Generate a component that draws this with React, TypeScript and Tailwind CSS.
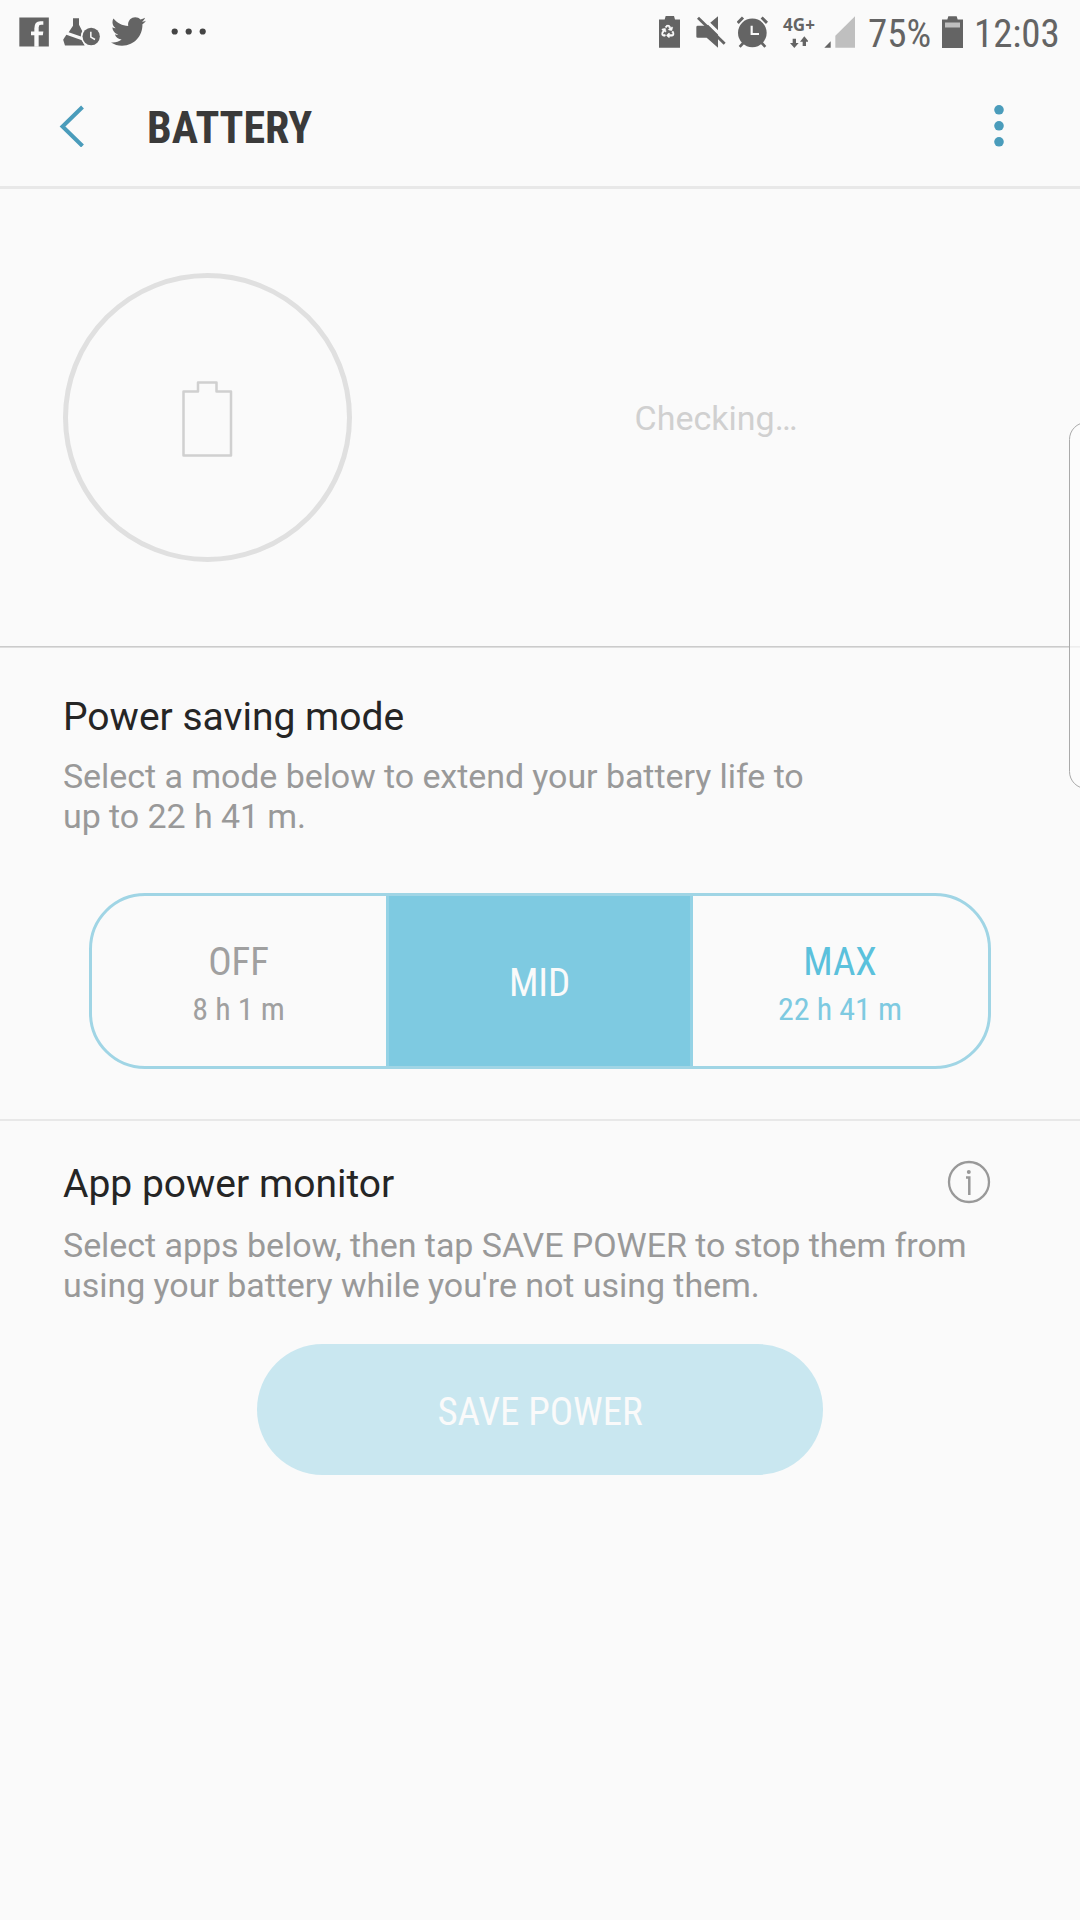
import { FaRecycle, FaTwitter } from "react-icons/fa";

const INK = "#646464";
const PAPER = "#fafafa";

function FacebookIcon() {
  return (
    <svg viewBox="58 46.5 90 96" className="h-8 w-[30px]">
      <path d="M59 51H147.500V138H59Z" fill={INK} />
      <path d="M104 139V104H94V93H104V84Q104 62 122 62H131V73H124Q117 73 117 80V93H131L129.500 104H117V139Z" fill={PAPER} />
    </svg>
  );
}

function SensorIcon() {
  return (
    <svg viewBox="189 46.500 114 96" className="ml-[14px] h-8 w-[38px]">
      <path d="M219 53H237V73L247 92L243 108L206 95L219 76Z" fill={INK} />
      <path d="M199 103L246 119L254 135H195L189.500 118Z" fill={INK} />
      <circle cx="273.500" cy="108" r="31" fill={PAPER} />
      <circle cx="273.500" cy="108" r="26" fill={INK} />
      <path d="M272.500 94V110L285 117" fill="none" stroke={PAPER} strokeWidth="4.500" />
    </svg>
  );
}

function PowerSaveBatteryIcon() {
  return (
    <svg viewBox="57 46.500 63 96" className="h-8 w-[21px]">
      <path d="M57 57H74L77 46.500H102L105 57H120V142H57Z" fill={INK} />
      <FaRecycle x={64} y={73} width={50} height={50} color={PAPER} stroke={PAPER} strokeWidth={22} />
    </svg>
  );
}

function MutedIcon() {
  return (
    <svg viewBox="136 22.500 90 96" className="ml-4 h-8 w-[30px]">
      <path d="M141 52H168L202 23V118L168 88H141Q137 88 137 84V56Q137 52 141 52Z" fill={INK} />
      <path d="M148 19L228 97" stroke={PAPER} strokeWidth="9" />
      <path d="M142 28L222 106" stroke={INK} strokeWidth="8.500" />
    </svg>
  );
}

function AlarmIcon() {
  return (
    <svg viewBox="260 22.500 93 96" className="ml-[11px] h-8 w-[31px]">
      <g stroke={INK} fill="none">
        <path d="M262 43L278 27M334 27L350 43" strokeWidth="9" />
        <path d="M268 115L280 102M345 115L333 102" strokeWidth="8" />
      </g>
      <circle cx="306" cy="73" r="43" fill={INK} />
      <path d="M304 52V76.500H326" fill="none" stroke={PAPER} strokeWidth="6.500" />
    </svg>
  );
}

function NetworkBadge() {
  return (
    <div className="ml-[15px] flex h-8 w-8 flex-col items-center font-['Open_Sans',sans-serif]">
      <span className="text-[17px] leading-[18px] font-bold text-[#646464]">4G+</span>
      <svg viewBox="420 82 56 36" className="mt-0.5 h-3 w-[18.660px]">
        <path d="M428 90H438V103H446L433 118L420 103H428Z" fill={INK} />
        <path d="M458 112H468V99H476L463 83L450 99H458Z" fill={INK} />
      </svg>
    </div>
  );
}

function SignalIcon() {
  return (
    <svg viewBox="554 46.500 93 96" className="ml-[9px] h-8 w-[31px]">
      <path d="M555 141.500L574 122V141.500Z" fill={INK} />
      <path d="M588 142V106L647 47V142Z" fill="#bfbfbf" />
    </svg>
  );
}

function BatteryLevelIcon() {
  return (
    <svg viewBox="276 46.500 63 96" className="h-8 w-[21px]">
      <path d="M276 57H292L295 47.500H320L323 57H339V142.500H276Z" fill={INK} />
      <path d="M285 66H330V81H285Z" fill="#bfbfbf" />
    </svg>
  );
}

function StatusBar() {
  return (
    <div className="flex h-[63px] items-center justify-between pl-[19px] font-['Roboto_Condensed',sans-serif] text-[39px] leading-[46px] text-[#646464]">
      <div className="flex items-center">
        <FacebookIcon />
        <SensorIcon />
        <FaTwitter className="ml-[10px] h-[35px] w-[35px]" />
        <svg viewBox="0 0 36 8" className="ml-[25px] h-2 w-9" fill="#444444">
          <circle cx="3.700" cy="3.500" r="3.100" />
          <circle cx="17.700" cy="3.500" r="3.100" />
          <circle cx="31.700" cy="3.500" r="3.100" />
        </svg>
      </div>
      <div className="flex items-center">
        <PowerSaveBatteryIcon />
        <MutedIcon />
        <AlarmIcon />
        <NetworkBadge />
        <SignalIcon />
        <span className="ml-[13px] w-[74px] pt-1">75%</span>
        <BatteryLevelIcon />
        <span className="ml-[11px] w-[106px] pt-1 tracking-[-0.1px]">12:03</span>
      </div>
    </div>
  );
}

function Header() {
  return (
    <header className="flex h-[126px] items-center border-b-[3px] border-[#e8e8e8] pt-[3px] pl-[59px] pr-[76.500px]">
      <svg viewBox="0 0 26 42" className="h-[42px] w-[26px]" fill="none" stroke="#4a9cbb" strokeWidth="4">
        <path d="M23.500 2L3.500 21.500L23.500 41" />
      </svg>
      <h1 className="ml-[62px] flex-1 pt-1 font-['Roboto_Condensed',sans-serif] text-[44px] leading-[52px] font-bold text-[#3a3a3a]">BATTERY</h1>
      <svg viewBox="0 0 10 42" className="h-[42px] w-[10px]" fill="#4a9cbb">
        <circle cx="5" cy="4.800" r="4.800" />
        <circle cx="5" cy="20.800" r="4.800" />
        <circle cx="5" cy="36.800" r="4.800" />
      </svg>
    </header>
  );
}

export default function App() {
  return (
    <div className="relative h-[1920px] w-[1080px] overflow-hidden bg-[#fafafa] font-['Roboto',sans-serif]">
      <StatusBar />
      <Header />

      <section className="flex h-[458px] items-center border-b border-[#cbcbcb] pb-px pl-[63px]">
        <div className="flex h-[289px] w-[289px] items-center justify-center rounded-full border-[5px] border-[#e0e0e0]">
          <svg viewBox="0 0 51 76" className="mt-[3px] h-[76px] w-[51px]" fill="none" stroke="#d0d0d0" strokeWidth="2.500" strokeLinejoin="round">
            <path d="M1.500 10.500H16V1.500H34.500V10.500H49V74.500H1.500Z" />
          </svg>
        </div>
        <p className="flex-1 pt-0.5 text-center text-[34px] leading-10 text-[#d0d0d0]">Checking…</p>
      </section>

      <section className="border-t border-b-2 border-t-[#dedede] border-b-[#e8e8e8] px-[63px] pt-[46px] pb-[50px]">
        <h2 className="text-[39px] leading-[46px] text-[#252525]">Power saving mode</h2>
        <p className="mt-4 w-[760px] text-[34px] leading-10 tracking-[-0.07px] text-[#999999]">
          Select a mode below to extend your battery life to up to 22 h 41 m.
        </p>
        <div className="mt-[57px] ml-[26px] flex h-[176px] w-[902px] overflow-hidden rounded-[56px] border-[3px] border-[#a0d5e5] font-['Roboto_Condensed',sans-serif] text-[39px] leading-[46px] tracking-[-0.1px]">
          <div className="flex w-[294px] flex-col items-center justify-center pt-[5px] pr-px text-[#a0a0a0]">
            <span>OFF</span>
            <span className="mt-[5px] text-[32px] leading-[38px]">8 h 1 m</span>
          </div>
          <div className="flex w-[307px] items-center justify-center border-x-[3px] border-[#94d2e5] bg-[#7ecae1] pt-[3px] text-[#fafafa]">
            <span>MID</span>
          </div>
          <div className="flex flex-1 flex-col items-center justify-center pt-[5px] pr-px text-[#5bc1dc]">
            <span>MAX</span>
            <span className="mt-[5px] text-[32px] leading-[38px] text-[#7ecae1]">22 h 41 m</span>
          </div>
        </div>
      </section>

      <section className="px-[63px] pt-[39px]">
        <div className="flex h-[46px] justify-between pr-[26px]">
          <h2 className="pt-px text-[39px] leading-[46px] text-[#252525]">App power monitor</h2>
          <svg viewBox="0 0 44 44" className="h-11 w-11" fill="none" stroke="#999999">
            <circle cx="22" cy="22" r="20" strokeWidth="2.300" />
            <path d="M19 17.500H22.300V35" strokeWidth="2.500" />
            <circle cx="21.800" cy="12" r="2" fill="#999999" stroke="none" />
          </svg>
        </div>
        <p className="mt-[19px] text-[34px] leading-10 tracking-[-0.05px] text-[#999999]">
          Select apps below, then tap SAVE POWER to stop them from using your battery while you're not using them.
        </p>
        <button className="mx-auto mt-[39px] flex h-[131px] w-[566px] items-center justify-center rounded-full bg-[#c9e7f0] pt-1 font-['Roboto_Condensed',sans-serif] text-[39px] leading-[46px] tracking-[-0.1px] text-[#fafafa]">
          SAVE POWER
        </button>
      </section>

      <div className="absolute top-[422px] -right-6 h-[367px] w-[35px] rounded-[18px] border-[1.500px] border-[#aaaaaa] bg-[#fcfcfc]/70" />
    </div>
  );
}
